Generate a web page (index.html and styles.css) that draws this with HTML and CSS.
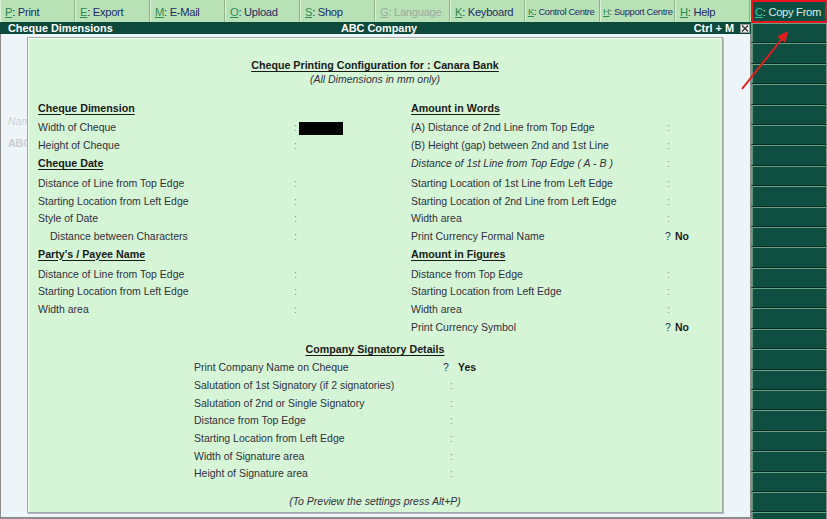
FILE: index.html
```html
<html lang="en">
<head>
    <meta charset="UTF-8">
    <meta name="viewport" content="width=device-width, initial-scale=1.0">
    <link rel="stylesheet" href="styles.css">
    <title>Cheque Dimensions</title>
</head>
<body>
<div class="screen">
    <div class="main">
        <div class="toolbar">
            <div class="tool"><u>P</u>: Print</div>
            <div class="tool"><u>E</u>: Export</div>
            <div class="tool"><u>M</u>: E-Mail</div>
            <div class="tool"><u>O</u>: Upload</div>
            <div class="tool"><u>S</u>: Shop</div>
            <div class="tool disabled"><u>G</u>: Language</div>
            <div class="tool"><u>K</u>: Keyboard</div>
            <div class="tool small"><u>K</u>: Control Centre</div>
            <div class="tool small"><u>H</u>: Support Centre</div>
            <div class="tool"><u>H</u>: Help</div>
        </div>

        <div class="titlebar">
            <div class="tb-left">Cheque Dimensions</div>
            <div class="tb-center">ABC Company</div>
            <div class="tb-right">Ctrl + M
                <span class="close-box">
                    <svg width="8" height="7" viewBox="0 0 8 7"><path d="M1 0.5 L7 6.5 M7 0.5 L1 6.5" stroke="#333" stroke-width="1.4"/></svg>
                </span>
            </div>
        </div>

        <div class="workspace">
            <div class="gutter">
                <div class="ghost ghost-name">Nam</div>
                <div class="ghost ghost-co">ABC</div>
            </div>

            <div class="panel">
                <div class="panel-title">Cheque Printing Configuration for : Canara Bank</div>
                <div class="panel-sub">(All Dimensions in mm only)</div>

                <div class="columns">
                    <div class="col">
                        <div class="head">Cheque Dimension</div>
                        <div class="row"><span class="label">Width of Cheque</span><span class="sep">:</span><span class="value"><span class="filled"></span></span></div>
                        <div class="row"><span class="label">Height of Cheque</span><span class="sep">:</span></div>
                        <div class="head">Cheque Date</div>
                        <div class="row"><span class="label">Distance of Line from Top Edge</span><span class="sep">:</span></div>
                        <div class="row"><span class="label">Starting Location from Left Edge</span><span class="sep">:</span></div>
                        <div class="row"><span class="label">Style of Date</span><span class="sep">:</span></div>
                        <div class="row"><span class="label indent">Distance between Characters</span><span class="sep">:</span></div>
                        <div class="head">Party's / Payee Name</div>
                        <div class="row"><span class="label">Distance of Line from Top Edge</span><span class="sep">:</span></div>
                        <div class="row"><span class="label">Starting Location from Left Edge</span><span class="sep">:</span></div>
                        <div class="row"><span class="label">Width area</span><span class="sep">:</span></div>
                    </div>

                    <div class="col">
                        <div class="head">Amount in Words</div>
                        <div class="row"><span class="label">(A) Distance of 2nd Line from Top Edge</span><span class="sep">:</span></div>
                        <div class="row"><span class="label">(B) Height (gap) between 2nd and 1st Line</span><span class="sep">:</span></div>
                        <div class="row gap"><span class="label calc">Distance of 1st Line from Top Edge ( A - B )</span><span class="sep">:</span></div>
                        <div class="row"><span class="label">Starting Location of 1st Line from Left Edge</span><span class="sep">:</span></div>
                        <div class="row"><span class="label">Starting Location of 2nd Line from Left Edge</span><span class="sep">:</span></div>
                        <div class="row"><span class="label">Width area</span><span class="sep">:</span></div>
                        <div class="row"><span class="label">Print Currency Formal Name</span><span class="sep ask">?</span><span class="flag">No</span></div>
                        <div class="head">Amount in Figures</div>
                        <div class="row"><span class="label">Distance from Top Edge</span><span class="sep">:</span></div>
                        <div class="row"><span class="label">Starting Location from Left Edge</span><span class="sep">:</span></div>
                        <div class="row"><span class="label">Width area</span><span class="sep">:</span></div>
                        <div class="row"><span class="label">Print Currency Symbol</span><span class="sep ask">?</span><span class="flag">No</span></div>
                    </div>
                </div>

                <div class="head sig-head">Company Signatory Details</div>
                <div class="sig-rows">
                    <div class="row"><span class="label">Print Company Name on Cheque</span><span class="sep ask far">?</span><span class="flag">Yes</span></div>
                    <div class="row"><span class="label">Salutation of 1st Signatory (if 2 signatories)</span><span class="sep">:</span></div>
                    <div class="row"><span class="label">Salutation of 2nd or Single Signatory</span><span class="sep">:</span></div>
                    <div class="row"><span class="label">Distance from Top Edge</span><span class="sep">:</span></div>
                    <div class="row"><span class="label">Starting Location from Left Edge</span><span class="sep">:</span></div>
                    <div class="row"><span class="label">Width of Signature area</span><span class="sep">:</span></div>
                    <div class="row"><span class="label">Height of Signature area</span><span class="sep">:</span></div>
                </div>

                <div class="panel-foot">(To Preview the settings press Alt+P)</div>
            </div>
        </div>
    </div>

    <div class="sidebar">
        <div class="side-btn copy"><u>C</u>: Copy From</div>
        <div class="side-btn"></div>
        <div class="side-btn"></div>
        <div class="side-btn"></div>
        <div class="side-btn"></div>
        <div class="side-btn"></div>
        <div class="side-btn"></div>
        <div class="side-btn"></div>
        <div class="side-btn"></div>
        <div class="side-btn"></div>
        <div class="side-btn"></div>
        <div class="side-btn"></div>
        <div class="side-btn"></div>
        <div class="side-btn"></div>
        <div class="side-btn"></div>
        <div class="side-btn"></div>
        <div class="side-btn"></div>
        <div class="side-btn"></div>
        <div class="side-btn"></div>
        <div class="side-btn"></div>
        <div class="side-btn"></div>
        <div class="side-btn"></div>
        <div class="side-btn"></div>
        <div class="side-btn"></div>
        <div class="side-btn"></div>
        <div class="side-btn"></div>
    </div>

    <!-- annotation arrow pointing at Copy From -->
    <svg class="arrow" width="827" height="519" viewBox="0 0 827 519">
        <line x1="742" y1="89" x2="781.5" y2="39.5" stroke="#e41c1c" stroke-width="2"/>
        <polygon points="788,31 785.3,42.8 777.2,36.4" fill="#e41c1c"/>
    </svg>
</div>
</body>
</html>
```

FILE: styles.css
```css
body {
    margin: 0;
    font-family: "Liberation Sans", Arial, sans-serif;
    background-color: #eef5f8;
}

.screen {
    position: relative;
    width: 827px;
    height: 519px;
    display: flex;
    overflow: hidden;
}

.main {
    width: 751px;
    display: flex;
    flex-direction: column;
}

/* top button bar */
.toolbar {
    height: 22px;
    display: flex;
    background-color: #b8e2b6;
}

.tool {
    width: 75px;
    box-sizing: border-box;
    padding: 2px 0 0 4px;
    line-height: 20px;
    font-size: 11.2px;
    letter-spacing: -0.3px;
    color: #1d2a66;
    white-space: nowrap;
    overflow: hidden;
    border-left: 1px solid #dcf3da;
    border-right: 1px solid #8fb28d;
}

.tool u {
    color: #2b8a52;
}

.tool.small {
    font-size: 9.4px;
    letter-spacing: -0.35px;
    padding-left: 2px;
}

.tool.disabled,
.tool.disabled u {
    color: #9aaba0;
}

/* title bar */
.titlebar {
    height: 12px;
    display: flex;
    background-color: #0e4a3c;
    color: #ffffff;
    font-weight: bold;
    font-size: 10.9px;
    line-height: 12px;
}

.tb-left {
    flex: 1;
    padding-left: 8px;
}

.tb-center {
    white-space: nowrap;
}

.tb-right {
    flex: 1;
    display: flex;
    justify-content: flex-end;
    align-items: center;
    padding-right: 1px;
}

.close-box {
    width: 10px;
    height: 9px;
    margin-left: 6px;
    box-sizing: border-box;
    background-color: #f2f2f2;
    border: 1px solid #9a9a9a;
    display: flex;
    align-items: center;
    justify-content: center;
}

/* work area */
.workspace {
    flex: 1;
    display: flex;
    align-items: flex-start;
    background-color: #eef5f8;
    border-left: 1px solid #8c8c8c;
    border-right: 1px solid #8c8c8c;
    border-bottom: 2px solid #8c8c8c;
}

.gutter {
    width: 26px;
    padding: 78.5px 0 0 7px;
    box-sizing: border-box;
    overflow: hidden;
    white-space: nowrap;
}

.ghost {
    color: #c9cfd3;
    font-size: 10.5px;
    line-height: 17.7px;
}

.ghost-name {
    font-style: italic;
}

.ghost-co {
    font-weight: bold;
    margin-top: 5px;
}

.panel {
    width: 696px;
    height: 476px;
    margin-top: 3px;
    box-sizing: border-box;
    padding: 20px 10px 0 10px;
    background-color: #d6f5d6;
    border: 1px solid #a2a6a2;
    box-shadow: inset 1px 1px 0 #f4fff4, 1px 1px 0 #b8bcbc;
    color: #30303c;
    font-size: 10.5px;
}

.panel-title {
    text-align: center;
    font-weight: bold;
    font-size: 10.7px;
    line-height: 14px;
    color: #1a1a1a;
    text-decoration: underline;
    text-underline-offset: 2px;
}

.panel-sub {
    text-align: center;
    font-style: italic;
    line-height: 14px;
}

.columns {
    display: grid;
    grid-template-columns: 373px 1fr;
    margin-top: 13.5px;
}

.head {
    font-weight: bold;
    font-size: 10.7px;
    line-height: 17.7px;
    height: 17.7px;
    margin-bottom: 2.3px;
    color: #1a1a1a;
    text-decoration: underline;
    text-underline-offset: 2px;
}

.row {
    display: flex;
    height: 17.7px;
    line-height: 17.7px;
    white-space: nowrap;
}

.row.gap {
    margin-bottom: 2.3px;
}

.label {
    width: 256px;
    box-sizing: border-box;
}

.label.indent {
    padding-left: 12px;
}

.label.calc {
    font-style: italic;
}

.sep {
    width: 5px;
    color: #8a8a8a;
}

.sep.ask {
    width: 8px;
    color: #30303c;
    text-indent: -2px;
}

.sep.ask.far {
    text-indent: -7px;
}

.value {
    display: flex;
    align-items: center;
}

.filled {
    display: inline-block;
    width: 44px;
    height: 13px;
    background-color: #000000;
}

.flag {
    font-weight: bold;
    color: #1a1a1a;
}

.sig-head {
    text-align: center;
    margin-top: 4.5px;
    margin-bottom: 0.7px;
}

.sig-rows {
    padding-left: 156px;
}

.panel-foot {
    margin-top: 9.6px;
    text-align: center;
    font-style: italic;
    line-height: 17.7px;
}

/* right hand button column */
.sidebar {
    width: 76px;
    display: flex;
    flex-direction: column;
    overflow: hidden;
    background-color: #0f4f41;
}

.side-btn {
    height: 20.4px;
    flex-shrink: 0;
    box-sizing: border-box;
    background-color: #0f4f41;
    border-left: 1px solid #8c8c8c;
    border-right: 1px solid #8c8c8c;
    border-top: 1px solid #6aa086;
    border-bottom: 1px solid #072a21;
    box-shadow: inset 1px 0 0 #5e9078;
}

.side-btn.copy {
    height: 23px;
    border: 2px solid #e8141e;
    box-shadow: none;
    padding: 1px 0 0 2px;
    line-height: 18px;
    font-size: 11.2px;
    letter-spacing: -0.3px;
    color: #dcefe6;
    white-space: nowrap;
}

.side-btn.copy u {
    color: #3cc39e;
}

.arrow {
    position: absolute;
    left: 0;
    top: 0;
    pointer-events: none;
}
```
